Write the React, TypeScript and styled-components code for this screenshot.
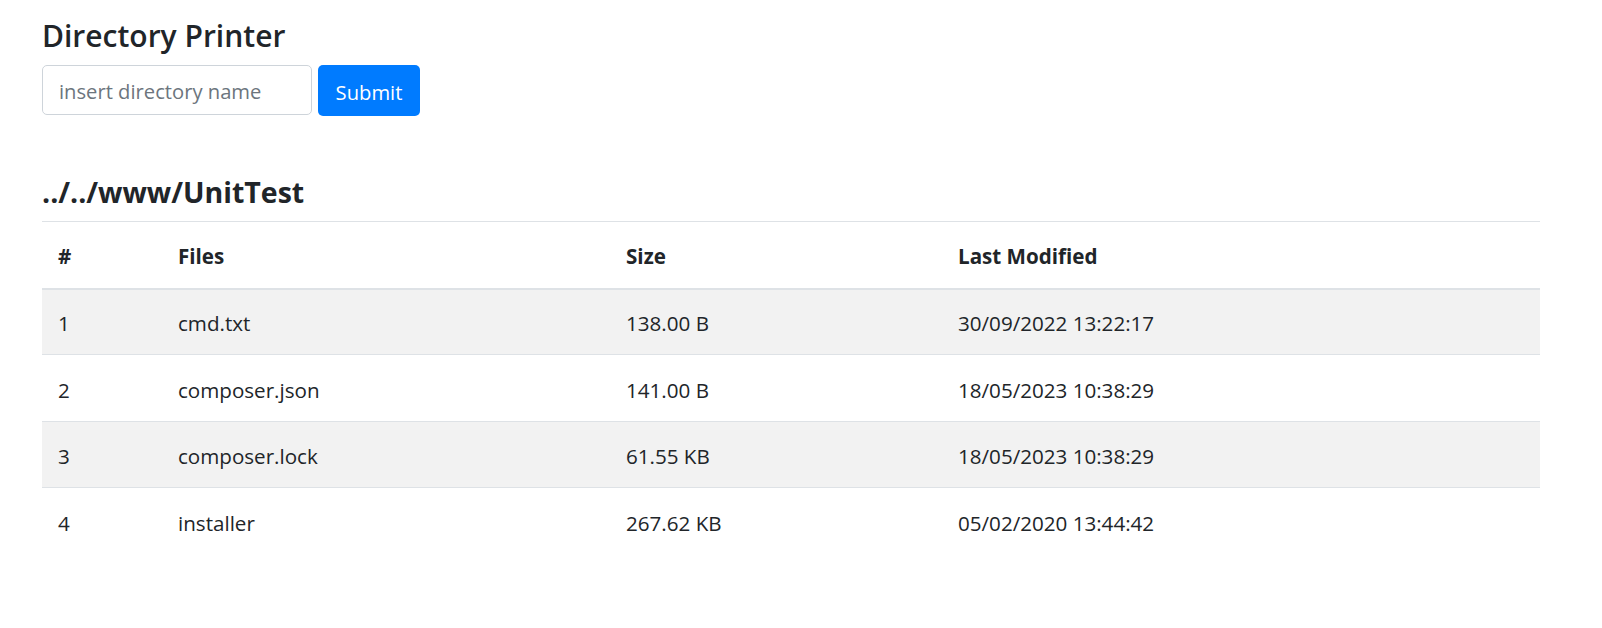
import React from 'react';
import styled, { createGlobalStyle } from 'styled-components';

interface FileEntry {
  name: string;
  size: string;
  modified: string;
}

const files: Array<FileEntry> = [
  { name: 'cmd.txt', size: '138.00 B', modified: '30/09/2022 13:22:17' },
  { name: 'composer.json', size: '141.00 B', modified: '18/05/2023 10:38:29' },
  { name: 'composer.lock', size: '61.55 KB', modified: '18/05/2023 10:38:29' },
  { name: 'installer', size: '267.62 KB', modified: '05/02/2020 13:44:42' },
];

const GlobalStyle = createGlobalStyle`
  body {
    margin: 0;
    background: #fff;
    color: #212529;
    font-family: "Open Sans", "Noto Sans", sans-serif;
  }
`;

const Page = styled.div`
  display: flex;
  flex-direction: column;
  padding: 17px 62px 0 42px;
`;

const Title = styled.h1`
  margin: 0;
  font-size: 30px;
  font-weight: 600;
  line-height: 38px;
`;

const Form = styled.form`
  display: flex;
  gap: 6px;
  margin-top: 10px;
`;

const Input = styled.input`
  width: 270px;
  height: 50px;
  box-sizing: border-box;
  padding: 2px 16px 0;
  border: 1px solid #ced4da;
  border-radius: 5px;
  font-family: inherit;
  font-size: 20.2px;
  color: #495057;

  &::placeholder {
    color: #6c757d;
  }
`;

const Button = styled.button`
  width: 102px;
  height: 51px;
  padding: 3px 0 0;
  border: none;
  border-radius: 5px;
  background: #007bff;
  color: #fff;
  font-family: inherit;
  font-size: 20.2px;
`;

const DirName = styled.h2`
  margin: 59px 0 0;
  font-size: 28.5px;
  font-weight: 700;
  line-height: 34px;
  padding-bottom: 12px;
`;

const Table = styled.table`
  width: 100%;
  border-collapse: collapse;
  font-size: 20.6px;
`;

const HeadCell = styled.th<{ $width?: number }>`
  width: ${(p) => (p.$width ? `${p.$width}px` : 'auto')};
  height: 67px;
  padding: 2px 16px 0;
  text-align: left;
  font-weight: 700;
  border-top: 1px solid #dee2e6;
  border-bottom: 2px solid #dee2e6;
  box-sizing: border-box;
`;

const Row = styled.tr<{ $striped: boolean }>`
  background: ${(p) => (p.$striped ? '#f2f2f2' : 'transparent')};
`;

const Cell = styled.td`
  height: 66.4px;
  padding: 3px 16px 0;
  border-top: 1px solid #dee2e6;
  box-sizing: border-box;
`;

const App: React.FunctionComponent = () => {
  return (
    <Page>
      <GlobalStyle />
      <Title>Directory Printer</Title>
      <Form onSubmit={(e) => e.preventDefault()}>
        <Input type="text" placeholder="insert directory name" />
        <Button type="submit">Submit</Button>
      </Form>
      <DirName>../../www/UnitTest</DirName>
      <Table>
        <thead>
          <tr>
            <HeadCell $width={120}>#</HeadCell>
            <HeadCell $width={448}>Files</HeadCell>
            <HeadCell $width={332}>Size</HeadCell>
            <HeadCell>Last Modified</HeadCell>
          </tr>
        </thead>
        <tbody>
          {files.map((file, index) => (
            <Row key={file.name} $striped={index % 2 === 0}>
              <Cell>{index + 1}</Cell>
              <Cell>{file.name}</Cell>
              <Cell>{file.size}</Cell>
              <Cell>{file.modified}</Cell>
            </Row>
          ))}
        </tbody>
      </Table>
    </Page>
  );
};

export default App;
